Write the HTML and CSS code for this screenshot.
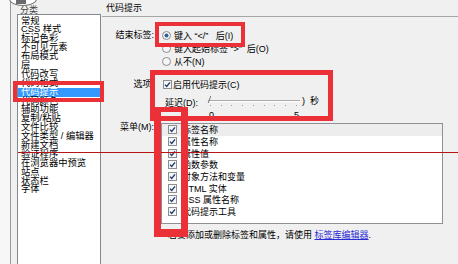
FILE: index.html
```html
<!DOCTYPE html>
<html lang="zh-CN">
<head>
<meta charset="utf-8">
<title>首选参数 - 代码提示</title>
<link rel="stylesheet" href="styles.css">
</head>
<body>
<div class="dialog">
  <div class="edge"></div>
  <aside class="sidebar">
    <div class="cat-label">分类</div>
    <ul class="cat-list">
      <li>常规</li>
      <li>CSS 样式</li>
      <li>标记色彩</li>
      <li>不可见元素</li>
      <li>布局模式</li>
      <li>层</li>
      <li>代码改写</li>
      <li>代码格式</li>
      <li class="selected">代码提示</li>
      <li>代码颜色</li>
      <li>辅助功能</li>
      <li>复制/粘贴</li>
      <li>文件比较</li>
      <li>文件类型 / 编辑器</li>
      <li>新建文档</li>
      <li>验证程序</li>
      <li>在浏览器中预览</li>
      <li>站点</li>
      <li>状态栏</li>
      <li>字体</li>
    </ul>
  </aside>
  <main class="panel">
    <h1 class="panel-title">代码提示</h1>
    <div class="form">
      <div class="label">结束标签:</div>
      <div class="radios">
        <div class="opt"><svg class="radio" width="9" height="9" viewBox="0 0 9 9"><circle cx="4.5" cy="4.5" r="4" fill="#f6f6f6" stroke="#8a8a8a"/><circle cx="4.5" cy="4.5" r="2" fill="#2f5f9c"/></svg><span class="txt">键入 “&lt;/”   后(I)</span></div>
        <div class="opt"><svg class="radio" width="9" height="9" viewBox="0 0 9 9"><circle cx="4.5" cy="4.5" r="4" fill="#f6f6f6" stroke="#8a8a8a"/></svg><span class="txt">键入起始标签 “&gt;”  后(O)</span></div>
        <div class="opt"><svg class="radio" width="9" height="9" viewBox="0 0 9 9"><circle cx="4.5" cy="4.5" r="4" fill="#f6f6f6" stroke="#8a8a8a"/></svg><span class="txt">从不(N)</span></div>
      </div>

      <div class="label row-options">选项:</div>
      <div class="options row-options">
        <div class="opt check-opt"><svg class="check" width="9" height="9" viewBox="0 0 9 9"><rect x="0.5" y="0.5" width="8" height="8" fill="#f3f6fa" stroke="#8e8e8e"/><path d="M2 4.6 L3.7 6.4 L7 2.4" fill="none" stroke="#1d3566" stroke-width="1.3"/></svg><span class="txt">启用代码提示(C)</span></div>
        <div class="delay">
          <span class="delay-label">延迟(D):</span>
          <div class="slider">
            <div class="track"><span class="thumb"></span></div>
            <div class="ticks"></div>
            <div class="scale"><span>0</span><span>5</span></div>
          </div>
          <span class="unit">)  秒</span>
        </div>
      </div>

      <div class="label row-menu menu-label">菜单(M):</div>
      <ul class="menu-list row-menu">
        <li class="current"><svg class="check" width="9" height="9" viewBox="0 0 9 9"><rect x="0.5" y="0.5" width="8" height="8" fill="#f3f6fa" stroke="#8e8e8e"/><path d="M2 4.6 L3.7 6.4 L7 2.4" fill="none" stroke="#1d3566" stroke-width="1.3"/></svg>标签名称</li>
        <li><svg class="check" width="9" height="9" viewBox="0 0 9 9"><rect x="0.5" y="0.5" width="8" height="8" fill="#f3f6fa" stroke="#8e8e8e"/><path d="M2 4.6 L3.7 6.4 L7 2.4" fill="none" stroke="#1d3566" stroke-width="1.3"/></svg>属性名称</li>
        <li><svg class="check" width="9" height="9" viewBox="0 0 9 9"><rect x="0.5" y="0.5" width="8" height="8" fill="#f3f6fa" stroke="#8e8e8e"/><path d="M2 4.6 L3.7 6.4 L7 2.4" fill="none" stroke="#1d3566" stroke-width="1.3"/></svg>属性值</li>
        <li><svg class="check" width="9" height="9" viewBox="0 0 9 9"><rect x="0.5" y="0.5" width="8" height="8" fill="#f3f6fa" stroke="#8e8e8e"/><path d="M2 4.6 L3.7 6.4 L7 2.4" fill="none" stroke="#1d3566" stroke-width="1.3"/></svg>函数参数</li>
        <li><svg class="check" width="9" height="9" viewBox="0 0 9 9"><rect x="0.5" y="0.5" width="8" height="8" fill="#f3f6fa" stroke="#8e8e8e"/><path d="M2 4.6 L3.7 6.4 L7 2.4" fill="none" stroke="#1d3566" stroke-width="1.3"/></svg>对象方法和变量</li>
        <li><svg class="check" width="9" height="9" viewBox="0 0 9 9"><rect x="0.5" y="0.5" width="8" height="8" fill="#f3f6fa" stroke="#8e8e8e"/><path d="M2 4.6 L3.7 6.4 L7 2.4" fill="none" stroke="#1d3566" stroke-width="1.3"/></svg>HTML 实体</li>
        <li><svg class="check" width="9" height="9" viewBox="0 0 9 9"><rect x="0.5" y="0.5" width="8" height="8" fill="#f3f6fa" stroke="#8e8e8e"/><path d="M2 4.6 L3.7 6.4 L7 2.4" fill="none" stroke="#1d3566" stroke-width="1.3"/></svg>CSS 属性名称</li>
        <li><svg class="check" width="9" height="9" viewBox="0 0 9 9"><rect x="0.5" y="0.5" width="8" height="8" fill="#f3f6fa" stroke="#8e8e8e"/><path d="M2 4.6 L3.7 6.4 L7 2.4" fill="none" stroke="#1d3566" stroke-width="1.3"/></svg>代码提示工具</li>
      </ul>

      <div class="row-note"></div>
      <p class="note row-note">若要添加或删除标签和属性，请使用 <a class="link">标签库编辑器</a>.</p>
    </div>
  </main>
</div>

<div class="corner"><span class="corner-knob"></span></div>
<div class="redline"></div>
<div class="mark mark-cat"></div>
<div class="mark mark-close"></div>
<div class="mark mark-options"></div>
<div class="mark mark-menu"></div>
</body>
</html>
```

FILE: styles.css
```css
html, body {
  margin: 0;
  padding: 0;
}

body {
  width: 458px;
  height: 264px;
  overflow: hidden;
  position: relative;
  background: #f0f0f0;
  color: #000;
  font-family: "Liberation Sans", "Noto Sans CJK SC", sans-serif;
  font-size: 9px;
}

.dialog {
  display: flex;
  height: 264px;
}

.edge {
  width: 10px;
  background: #f7f7f7;
  border-right: 1px solid #9a9a9a;
  flex: none;
}

/* ---------- category list ---------- */
.sidebar {
  width: 91px;
  flex: none;
  padding-left: 6px;
  box-sizing: border-box;
  display: flex;
  flex-direction: column;
}

.cat-label {
  height: 14px;
  line-height: 20px;
  padding-left: 3px;
  color: #444;
  white-space: nowrap;
}

.cat-list {
  list-style: none;
  margin: 0;
  padding: 1.5px 0 0 0;
  width: 84px;
  flex: 1;
  box-sizing: border-box;
  background: #fff;
  border: 1px solid #828790;
  border-bottom: none;
}

.cat-list li {
  font-size: 9.3px;
  height: 8.9px;
  line-height: 8.9px;
  padding-left: 3px;
  white-space: nowrap;
}

.cat-list li.selected {
  background: #3399ff;
  color: #fff;
  height: 9.6px;
  line-height: 9.6px;
  margin-bottom: -0.7px;
}

/* ---------- right panel ---------- */
.panel {
  flex: 1;
  display: flex;
  flex-direction: column;
}

.panel-title {
  margin: 0;
  font-size: 9px;
  font-weight: normal;
  height: 16px;
  line-height: 16px;
  padding-left: 4px;
  border-bottom: 1px solid #a5a5a5;
  white-space: nowrap;
}

.form {
  display: grid;
  grid-template-columns: 52px 1fr;
  column-gap: 7px;
  padding-top: 12px;
  align-items: start;
}

.label {
  text-align: right;
  line-height: 13px;
  white-space: nowrap;
}

.radios {
  display: flex;
  flex-direction: column;
}

.opt {
  display: flex;
  align-items: center;
  height: 13px;
  gap: 3px;
  padding-left: 1px;
  white-space: nowrap;
}

.opt .txt {
  white-space: pre;
}

.radio, .check {
  flex: none;
  display: block;
}

.row-options {
  margin-top: 10px;
}

.check-opt {
  padding-left: 2px;
  gap: 1px;
}

.delay {
  display: flex;
  align-items: flex-start;
  margin-top: 6px;
  padding-left: 4px;
}

.delay-label {
  width: 43px;
  line-height: 12px;
  white-space: nowrap;
}

.slider {
  width: 92px;
  position: relative;
}

.track {
  margin-top: 3px;
  height: 1px;
  background: #a7a7a7;
  border-bottom: 1px solid #fff;
  position: relative;
}

.thumb {
  position: absolute;
  left: 1px;
  top: -4px;
  width: 1px;
  height: 7px;
  background: #777;
  transform: skewX(-20deg);
}

.ticks {
  margin: 3px 2px 0 2px;
  height: 1px;
  background: repeating-linear-gradient(to right, #9a9a9a 0 1px, transparent 1px 10.75px);
}

.scale {
  display: flex;
  justify-content: space-between;
  line-height: 10px;
  margin-top: 4px;
  padding: 0 1px 0 1px;
}

.unit {
  margin-left: 2px;
  line-height: 8px;
  white-space: pre;
}

.row-menu {
  margin-top: 3px;
}

.menu-label {
  margin-top: 1px;
  line-height: 12px;
}

.menu-list {
  list-style: none;
  padding: 0;
  margin-bottom: 0;
  width: 282px;
  height: 101px;
  box-sizing: border-box;
  background: #fff;
  border: 1px solid #8e9096;
}

.menu-list li {
  display: flex;
  align-items: center;
  gap: 5px;
  height: 11.7px;
  padding-left: 6px;
  white-space: nowrap;
}

.menu-list li.current {
  background: #ededed;
}

.row-note {
  margin-top: 5px;
}

.note {
  margin-bottom: 0;
  line-height: 12px;
  padding-left: 7px;
  white-space: nowrap;
}

.link {
  color: #2a2ad6;
  text-decoration: underline;
}

/* ---------- overlays ---------- */
.corner {
  position: absolute;
  left: 9px;
  top: -8px;
  width: 28px;
  height: 14px;
  box-sizing: border-box;
  background: #fff;
  border: 1px solid #6f6f6f;
  border-radius: 50%;
}

.corner-knob {
  position: absolute;
  left: 6px;
  top: 7px;
  width: 10px;
  height: 4px;
  background: #6a6a6a;
}

.redline {
  position: absolute;
  left: 18px;
  top: 152px;
  width: 440px;
  height: 1px;
  background: #b51515;
}

.mark {
  position: absolute;
  box-sizing: border-box;
  border: 4px solid #ec3037;
}

.mark-cat {
  left: 13px;
  top: 81px;
  width: 91px;
  height: 21px;
}

.mark-close {
  left: 155px;
  top: 22px;
  width: 90px;
  height: 25px;
}

.mark-options {
  left: 150px;
  top: 70px;
  width: 183px;
  height: 51px;
  border-width: 5px;
}

.mark-menu {
  left: 154px;
  top: 107px;
  width: 34px;
  height: 130px;
  border-width: 5px 7px 8px 7px;
}
```
